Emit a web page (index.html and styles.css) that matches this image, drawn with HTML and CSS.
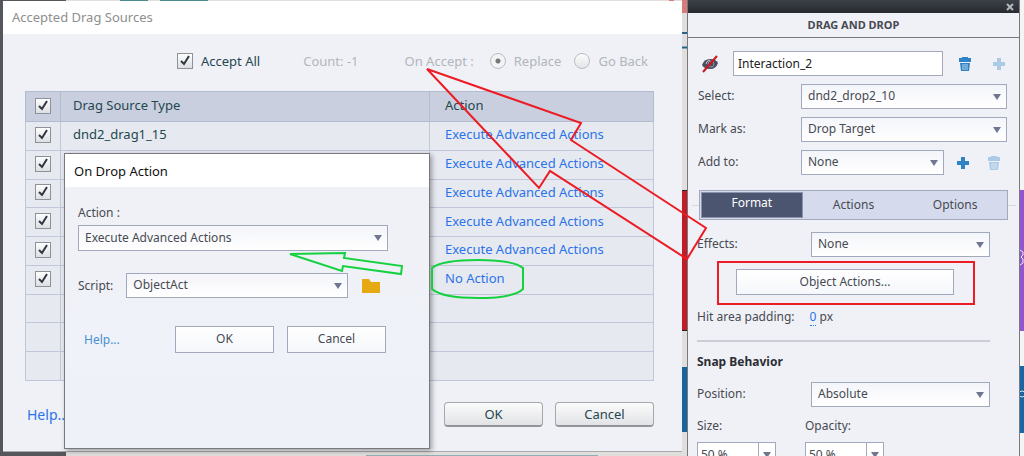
FILE: index.html
```
<!DOCTYPE html>
<html lang="en">
<head>
  <meta charset="UTF-8">
  <title>Accepted Drag Sources</title>
  <link rel="stylesheet" href="styles.css">
</head>
<body>
<div class="desktop">
  <svg class="backdrop" width="1024" height="456" aria-hidden="true">
    <rect width="1024" height="456" fill="#e0dfde"/>
    <rect width="66" height="456" fill="#55555c"/>
    <rect x="120" width="28" height="2" fill="#4f8a8c"/>
    <rect x="160" width="48" height="2" fill="#4f8a8c"/>
    <rect x="669" width="5" height="2" fill="#e07a7a"/>
    <rect x="682" width="6" height="13" fill="#d97a7c"/>
    <path d="M682 33h6M682 47.500h6" stroke="#21658f" stroke-width="2"/>
    <rect x="682" y="190" width="6" height="141" fill="#c01d27"/>
    <path d="M682 190.500h6M682 330.500h6" stroke="#222"/>
    <rect x="682" y="367" width="6" height="65" fill="#1b639b"/>
    <path d="M366 455.500h232" stroke="#8fb0b4"/>
    <rect x="1020" width="4" height="456" fill="#f4f4f4"/>
    <rect x="1020" y="190" width="4" height="141" fill="#9355cf"/>
    <path d="M1020 250l3 2v3l-2 2 2 2v4l-3 2" fill="none" stroke="#eee"/>
    <rect x="1020" y="366" width="4" height="67" fill="#1b66a5"/>
    <circle cx="1022" cy="394" r="3" fill="none" stroke="#cfe6d8"/>
  </svg>

  <section class="dialog">
    <h1 class="dialog-title">Accepted Drag Sources</h1>
    <div class="accept-row">
      <label class="accept-all"><input type="checkbox" class="check" checked> Accept All</label>
      <span class="muted count">Count: -1</span>
      <span class="muted on-accept">On Accept :</span>
      <label class="muted radio-label"><input type="radio" name="accept" class="radio" checked disabled> Replace</label>
      <label class="muted radio-label"><input type="radio" name="accept" class="radio" disabled> Go Back</label>
    </div>
    <table class="sources">
      <thead>
        <tr><th class="col-check"><input type="checkbox" class="check" aria-label="All" checked></th><th>Drag Source Type</th><th class="col-action">Action</th></tr>
      </thead>
      <tbody>
        <tr><td class="col-check"><input type="checkbox" class="check" aria-label="Row 1" checked></td><td>dnd2_drag1_15</td><td class="col-action"><a href="#">Execute Advanced Actions</a></td></tr>
        <tr><td class="col-check"><input type="checkbox" class="check" aria-label="Row 2" checked></td><td></td><td class="col-action"><a href="#">Execute Advanced Actions</a></td></tr>
        <tr><td class="col-check"><input type="checkbox" class="check" aria-label="Row 3" checked></td><td></td><td class="col-action"><a href="#">Execute Advanced Actions</a></td></tr>
        <tr><td class="col-check"><input type="checkbox" class="check" aria-label="Row 4" checked></td><td></td><td class="col-action"><a href="#">Execute Advanced Actions</a></td></tr>
        <tr><td class="col-check"><input type="checkbox" class="check" aria-label="Row 5" checked></td><td></td><td class="col-action"><a href="#">Execute Advanced Actions</a></td></tr>
        <tr><td class="col-check"><input type="checkbox" class="check" aria-label="Row 6" checked></td><td></td><td class="col-action"><a href="#">No Action</a></td></tr>
        <tr><td></td><td></td><td></td></tr>
        <tr><td></td><td></td><td></td></tr>
        <tr><td></td><td></td><td></td></tr>
      </tbody>
    </table>
    <div class="dialog-footer">
      <a href="#" class="help">Help...</a>
      <button type="button" class="round-btn">OK</button>
      <button type="button" class="round-btn">Cancel</button>
    </div>

    <section class="popup">
      <h2 class="popup-title">On Drop Action</h2>
      <div class="popup-body">
        <label for="action">Action :</label>
        <select id="action" class="select"><option>Execute Advanced Actions</option></select>
        <div class="script-row">
          <label for="script">Script:</label>
          <select id="script" class="select"><option>ObjectAct</option></select>
          <button type="button" class="icon-btn" aria-label="Browse">
            <svg width="20" height="16" viewBox="0 0 20 16"><path d="M1 1h7l2 3h9v11H1z" fill="#e6a912"/></svg>
          </button>
        </div>
        <div class="popup-footer">
          <a href="#" class="help">Help...</a>
          <button type="button" class="flat-btn">OK</button>
          <button type="button" class="flat-btn">Cancel</button>
        </div>
      </div>
    </section>
  </section>

  <aside class="panel">
    <div class="panel-bar">
      <button type="button" class="icon-btn" aria-label="Close"><svg width="8" height="8" viewBox="0 0 8 8"><path d="M1 1l6 6M7 1l-6 6" stroke="#b5b8bb" stroke-width="2"/></svg></button>
    </div>
    <h2 class="panel-title">DRAG AND DROP</h2>
    <div class="panel-body">
      <div class="name-row">
        <button type="button" class="icon-btn" aria-label="Hide">
          <svg width="18" height="18" viewBox="0 0 18 18">
            <path d="M1 10Q3 4 9 4t8 4q-2 6-8 6T1 10z" fill="#474e60"/>
            <path d="M5 9q0-3 4-4" fill="none" stroke="#c5cad5"/>
            <circle cx="10" cy="9" r="3" fill="none" stroke="#8d94a5"/>
            <path d="M2 17L16 1" stroke="#cc1720" stroke-width="2"/>
          </svg>
        </button>
        <input type="text" class="name-input" aria-label="Interaction name" value="Interaction_2">
        <button type="button" class="icon-btn" aria-label="Delete interaction"><svg width="14" height="16" viewBox="0 0 14 16"><use href="#trash"/></svg></button>
        <button type="button" class="icon-btn faded plus-btn" aria-label="Add interaction"><svg width="14" height="14" viewBox="0 0 14 14"><use href="#plus"/></svg></button>
      </div>
      <div class="field">
        <label for="select">Select:</label>
        <select id="select" class="select"><option>dnd2_drop2_10</option></select>
      </div>
      <div class="field">
        <label for="mark">Mark as:</label>
        <select id="mark" class="select"><option>Drop Target</option></select>
      </div>
      <div class="field field-add">
        <label for="add">Add to:</label>
        <select id="add" class="select"><option>None</option></select>
        <button type="button" class="icon-btn" aria-label="Add"><svg width="14" height="14" viewBox="0 0 14 14"><use href="#plus"/></svg></button>
        <button type="button" class="icon-btn faded" aria-label="Delete"><svg width="14" height="16" viewBox="0 0 14 16"><use href="#trash"/></svg></button>
      </div>
    </div>
    <div class="tabs-line">
      <div class="tabs">
        <button type="button" class="tab active">Format</button>
        <button type="button" class="tab">Actions</button>
        <button type="button" class="tab">Options</button>
      </div>
    </div>
    <div class="format">
      <div class="field field-wide">
        <label for="effects">Effects:</label>
        <select id="effects" class="select"><option>None</option></select>
      </div>
      <button type="button" class="flat-btn object-actions">Object Actions...</button>
      <p class="hit-area">Hit area padding: <a href="#">0</a> px</p>
      <h3 class="snap">Snap Behavior</h3>
      <div class="field field-wide">
        <label for="position">Position:</label>
        <select id="position" class="select"><option>Absolute</option></select>
      </div>
      <div class="pair">
        <div>
          <label for="size">Size:</label>
          <div class="combo"><input type="text" id="size" value="50 %"><button type="button" aria-label="Size values"></button></div>
        </div>
        <div>
          <label for="opacity">Opacity:</label>
          <div class="combo"><input type="text" id="opacity" value="50 %"><button type="button" aria-label="Opacity values"></button></div>
        </div>
      </div>
    </div>
  </aside>

  <svg class="marks" width="1024" height="456" fill="none" stroke-width="2" aria-hidden="true">
    <defs>
      <g id="trash" stroke="none" fill="#2d83c6">
        <path d="M4 1h6v1h3v4H1V2h3zM2 7h10l-1 8H3z"/>
        <path d="M5 8v6M7 8v6M9 8v6" stroke="#b9d3ea" stroke-width="1"/>
      </g>
      <path id="plus" d="M5 1h4v4h4v4H9v4H5V9H1V5h4z" fill="#2d83c6" stroke="none"/>
    </defs>
    <path d="M427 69L581 123L571 140L706 228L687 259L550 171L539 188z" stroke="#ed1c24"/>
    <rect x="718" y="262" width="256" height="42" stroke="#ed1c24"/>
    <path d="M290 254L345 253L344 258L402 266L401 274L343 266L342 271z" stroke="#14d23f"/>
    <path d="M432 268Q442 260 478 260T523 268V289Q514 298 478 298T432 289z" stroke="#14d23f"/>
  </svg>
</div>
</body>
</html>
```
FILE: styles.css
```
* {
  box-sizing: border-box;
}
body {
  margin: 0;
  font-family: "Noto Sans", "Open Sans", sans-serif;
  font-size: 12px;
  line-height: 17px;
  color: #474a52;
}
h1, h2, h3, p {
  margin: 0;
  font-weight: normal;
}
a {
  color: #2a73ea;
  text-decoration: none;
}
input, select, button {
  font: inherit;
  color: inherit;
}
.desktop {
  position: relative;
  display: grid;
  grid-template-columns: 1fr 333px;
  column-gap: 5px;
  align-items: start;
  height: 100vh;
  padding: 0 4px 0 3px;
  overflow: hidden;
}
.backdrop, .marks {
  position: absolute;
  top: 0;
  left: 0;
}
.marks {
  pointer-events: none;
}

/* main dialog */
.dialog {
  position: relative;
  margin-top: 1px;
  padding-bottom: 24px;
  background: #f0f1f7;
  border-bottom: 1px solid #aaa;
  color: #24474f;
  font-size: 13px;
}
.dialog-title {
  height: 33px;
  padding-left: 9px;
  background: #fff;
  color: #8e8e8e;
  font-size: 13px;
  line-height: 33px;
}
.accept-row {
  display: flex;
  align-items: center;
  height: 57px;
  padding: 0 0 3px 174px;
}
.accept-row label {
  display: flex;
  align-items: center;
  gap: 8px;
}
.muted {
  color: #b0b6ba;
}
.count {
  margin-left: 43px;
}
.on-accept {
  margin: 0 16px 0 46px;
}
.radio-label + .radio-label {
  margin-left: 13px;
}
.check {
  appearance: none;
  display: block;
  width: 16px;
  height: 16px;
  margin: 0;
  border: 1px solid #8d9299;
  background: url("data:image/svg+xml,%3Csvg xmlns='http://www.w3.org/2000/svg' viewBox='0 0 14 14'%3E%3Cpath d='M3 7l3 3L11 2' fill='none' stroke='%23303640' stroke-width='2'/%3E%3C/svg%3E"), linear-gradient(#fdfdfd, #dddfe2);
}
.radio {
  appearance: none;
  width: 16px;
  height: 16px;
  margin: 0;
  border: 1px solid #b9bcc0;
  border-radius: 50%;
  background: linear-gradient(#fcfcfc, #e4e5e8);
}
.radio:checked {
  background: radial-gradient(circle, #777 2px, #f3f3f5 3px);
}
.sources {
  width: calc(100% - 50px);
  height: 290px;
  margin-left: 22px;
  border-collapse: collapse;
  table-layout: fixed;
  background: #e6e9f0;
}
.sources th, .sources td {
  padding: 0 0 2px 12px;
  border: 1px solid #c0c7d8;
  font-weight: normal;
  text-align: left;
}
.sources tr {
  height: 28px;
}
.sources thead tr {
  height: 30px;
}
.sources th {
  background: #c9cfde;
  border-color: #b3bbcf;
}
.sources .col-check {
  width: 35px;
  padding-left: 9px;
}
.sources .col-action {
  width: 224px;
  padding-left: 15px;
}
.dialog-footer {
  display: flex;
  align-items: center;
  gap: 12px;
  margin: 21px 28px 0 24px;
}
.dialog-footer .help {
  flex: 1;
  font-size: 14px;
}
.round-btn {
  width: 99px;
  height: 25px;
  padding: 0;
  border: 1px solid #a5a8ac;
  border-bottom: 2px solid #929598;
  border-radius: 4px;
  background: linear-gradient(#fbfbfb, #e2e3e6);
}

/* drop action popup */
.popup {
  position: absolute;
  top: 152px;
  left: 61px;
  width: 366px;
  height: 296px;
  border: 1px solid #77797d;
  background: linear-gradient(#f0f1f7, #eef2f8);
  box-shadow: 2px 2px 5px rgba(0, 0, 0, 0.35);
  color: #474a52;
  font-size: 12px;
}
.popup-title {
  height: 33px;
  padding-left: 9px;
  background: #fff;
  color: #111;
  font-size: 13px;
  line-height: 34px;
}
.popup-body {
  display: flex;
  flex-direction: column;
  align-items: flex-start;
  padding: 17px 13px;
}
.popup-body .select {
  width: 310px;
  height: 26px;
  margin-top: 4px;
}
.script-row {
  display: flex;
  align-items: center;
  gap: 13px;
  margin-top: 22px;
}
.script-row .select {
  width: 222px;
  height: 25px;
  margin: 0;
}
.popup-footer {
  display: flex;
  align-items: center;
  align-self: stretch;
  gap: 13px;
  margin-top: 28px;
  padding: 0 30px 0 6px;
}
.popup-footer .help {
  flex: 1;
  color: #4a90cf;
}
.popup-footer .flat-btn {
  width: 99px;
  height: 27px;
}

/* shared controls */
.select {
  appearance: none;
  height: 25px;
  padding: 0 20px 2px 6px;
  border: 1px solid #a3a9bd;
  border-radius: 0;
  background: url("data:image/svg+xml,%3Csvg xmlns='http://www.w3.org/2000/svg' viewBox='0 0 8 6'%3E%3Cpath d='M0 0h8L4 6z' fill='%236f7690'/%3E%3C/svg%3E") no-repeat right 5px center / 8px 6px, linear-gradient(#f4f5fa, #fff);
}
.flat-btn {
  padding: 0 0 2px;
  border: 1px solid #a3a9bd;
  background: linear-gradient(#fff, #f5f7fb);
}
.icon-btn {
  display: flex;
  padding: 0;
  border: 0;
  background: none;
}
.faded {
  opacity: 0.35;
}

/* drag and drop panel */
.panel {
  position: relative;
  min-height: 100vh;
  border: solid #77797d;
  border-width: 0 1px;
  background: #f0f1f7;
}
.panel-bar {
  display: flex;
  align-items: center;
  justify-content: flex-end;
  height: 13px;
  padding-right: 5px;
  background: linear-gradient(#3c4147, #272b30);
}
.panel-title {
  height: 25px;
  border-bottom: 1px solid #77797d;
  font-size: 11px;
  font-weight: bold;
  line-height: 24px;
  text-align: center;
}
.panel-body {
  display: flex;
  flex-direction: column;
  gap: 8px;
  padding: 13px 12px 0 10px;
}
.name-row {
  display: flex;
  align-items: center;
  padding-left: 3px;
}
.name-input {
  flex: 1;
  min-width: 0;
  height: 25px;
  margin: 0 15px 0 14px;
  padding: 0 4px;
  border: 1px solid #a3a9bd;
  background: #fff;
  color: #222;
}
.plus-btn {
  margin: 0 1px 0 20px;
}
.field {
  display: grid;
  grid-template-columns: 103px 1fr;
  align-items: center;
}
.field label {
  padding-bottom: 2px;
}
.field-add {
  grid-template-columns: 103px 1fr 31px 32px;
}
.field-add .icon-btn {
  margin-left: 12px;
}
.tabs-line {
  margin-top: 15px;
  padding: 0 11px;
  background: linear-gradient(#d5d8df, #d5d8df) no-repeat center / 324px 1px;
}
.tabs {
  display: grid;
  grid-template-columns: repeat(3, 1fr);
  height: 30px;
  padding: 1px;
  border: 1px solid #a3a9bd;
  background: #d5daec;
}
.tab {
  padding: 0 0 2px;
  border: 0;
  background: none;
}
.tab.active {
  padding-bottom: 5px;
  border: 1px solid #8a93ab;
  background: #4b5570;
  color: #fff;
}
.format {
  display: flex;
  flex-direction: column;
  padding: 12px 29px 0 9px;
}
.field-wide {
  grid-template-columns: 114px 1fr;
}
.object-actions {
  height: 26px;
  margin: 12px 36px 0 39px;
}
.hit-area {
  padding: 13px 0 15px;
  border-bottom: 2px solid #cbced8;
}
.hit-area a {
  margin-left: 12px;
  border-bottom: 1px dotted #2a73ea;
}
.snap {
  margin: 11px 0 12px;
  color: #2c2e34;
  font-weight: bold;
  font-size: 12px;
}
.pair {
  display: grid;
  grid-template-columns: 108px 1fr;
  margin-top: 10px;
}
.combo {
  display: flex;
  width: 79px;
  height: 25px;
  margin-top: 8px;
  border: 1px solid #a3a9bd;
  background: #fff;
}
.combo input {
  flex: 1;
  min-width: 0;
  padding: 0 3px;
  border: 0;
}
.combo button {
  width: 17px;
  padding: 0;
  border: 0;
  border-left: 1px solid #a3a9bd;
  background: url("data:image/svg+xml,%3Csvg xmlns='http://www.w3.org/2000/svg' viewBox='0 0 8 6'%3E%3Cpath d='M0 0h8L4 6z' fill='%236f7690'/%3E%3C/svg%3E") no-repeat center / 8px 6px;
}
```
